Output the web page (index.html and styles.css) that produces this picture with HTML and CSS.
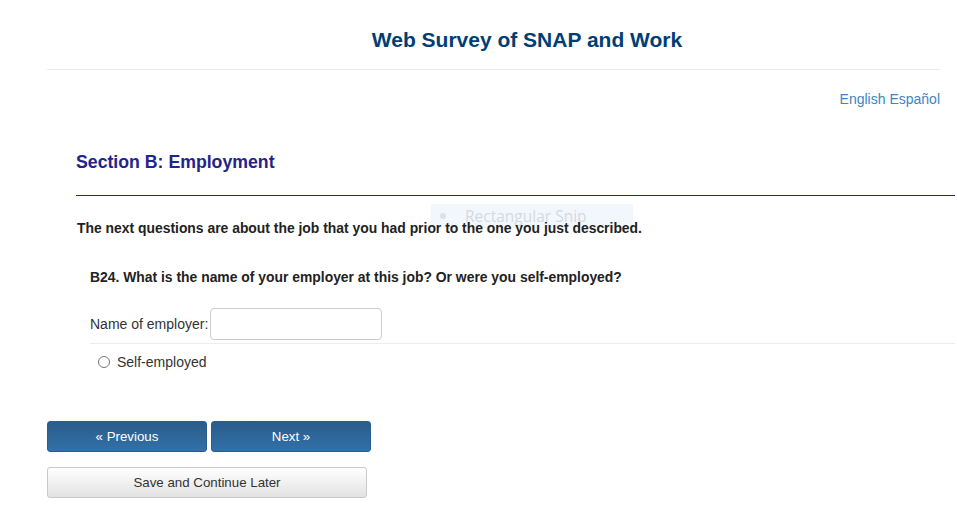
FILE: index.html
```html
<!DOCTYPE html>
<html lang="en">
<head>
<meta charset="utf-8">
<title>Web Survey of SNAP and Work</title>
<link rel="stylesheet" href="styles.css">
</head>
<body>
<div class="page">
  <header class="site-header">
    <h1 class="site-title">Web Survey of SNAP and Work</h1>
  </header>
  <div class="lang"><a href="#">English</a> <a href="#">Español</a></div>
  <div class="section">
    <h2 class="section-title">Section B: Employment</h2>
    <div class="intro">The next questions are about the job that you had prior to the one you just described.</div>
    <div class="question">
      <div class="q-text">B24. What is the name of your employer at this job? Or were you self-employed?</div>
      <div class="field-row">
        <label class="field-label" for="emp">Name of employer:</label>
        <input class="text-input" id="emp" type="text">
      </div>
      <label class="radio-row"><span class="radio"></span>Self-employed</label>
    </div>
  </div>
  <div class="nav">
    <div class="nav-row">
      <button class="btn btn-primary">« Previous</button>
      <button class="btn btn-primary">Next »</button>
    </div>
    <button class="btn btn-default">Save and Continue Later</button>
  </div>
  <div class="snip"><span class="snip-dot"></span>Rectangular Snip</div>
</div>
</body>
</html>
```

FILE: styles.css
```css
html, body {
  margin: 0;
  padding: 0;
}
html {
  background: #fff;
}
body {
  font-family: "Liberation Sans", Arial, sans-serif;
  color: #222;
}
.page {
  width: 893px;
  margin-left: 47px;
  position: relative;
  z-index: 0;
}
.site-header {
  border-bottom: 1px solid #eaeaea;
  padding: 28px 0 17px 67px;
  text-align: center;
}
.site-title {
  margin: 0;
  font-size: 21px;
  line-height: 24px;
  font-weight: bold;
  color: #003e74;
}
.lang {
  text-align: right;
  margin-top: 19px;
  font-size: 14px;
  line-height: 20px;
}
.lang a {
  color: #3b86c6;
  text-decoration: none;
}
.section {
  margin-left: 29px;
  margin-right: -15px;
  margin-top: 43px;
}
.section-title {
  margin: 0;
  font-size: 17.7px;
  line-height: 20px;
  font-weight: bold;
  color: #23238a;
  padding-bottom: 23px;
  border-bottom: 1px solid #24248c;
}
.intro {
  margin-top: 24px;
  margin-left: 1px;
  font-size: 13.9px;
  line-height: 16px;
  font-weight: bold;
  color: #222;
}
.question {
  margin-left: 14px;
  margin-top: 33px;
}
.q-text {
  font-size: 13.9px;
  line-height: 16px;
  font-weight: bold;
  color: #222;
}
.field-row {
  display: flex;
  align-items: center;
  margin-top: 23px;
  padding-bottom: 3px;
  border-bottom: 1px solid #ececec;
}
.field-label {
  font-size: 14px;
  color: #333;
  margin-right: 2px;
}
.text-input {
  width: 172px;
  height: 32px;
  box-sizing: border-box;
  border: 1px solid #ccc;
  border-radius: 4px;
  padding: 4px 8px;
  font-family: inherit;
  font-size: 14px;
}
.radio-row {
  display: flex;
  align-items: center;
  margin-top: 9px;
  margin-left: 8px;
  font-size: 14px;
  line-height: 18px;
  color: #333;
}
.radio {
  width: 12px;
  height: 12px;
  border: 1px solid #767676;
  border-radius: 50%;
  margin-right: 7px;
  box-sizing: border-box;
  background: #fff;
}
.nav {
  margin-top: 50px;
  display: flex;
  flex-direction: column;
  gap: 15px;
  align-items: flex-start;
}
.nav-row {
  display: flex;
  gap: 4px;
}
.btn {
  height: 31px;
  font-family: inherit;
  font-size: 13.3px;
  border-radius: 3px;
  cursor: pointer;
  padding: 0;
}
.btn-primary {
  width: 160px;
  color: #fff;
  border: 1px solid #2a5d8c;
  background: linear-gradient(to bottom, #2b5c8a, #3171a9);
}
.btn-default {
  width: 320px;
  color: #333;
  border: 1px solid #c9c9c9;
  background: linear-gradient(to bottom, #ffffff, #e2e2e2);
}
.snip {
  position: absolute;
  z-index: -1;
  left: 384px;
  top: 204px;
  width: 202px;
  height: 24px;
  background: #f2f7fd;
  color: #d6d9dd;
  font-family: "Open Sans", sans-serif;
  font-size: 15.5px;
  line-height: 24px;
  display: flex;
  align-items: center;
  box-sizing: border-box;
  padding-left: 9px;
}
.snip-dot {
  width: 6px;
  height: 6px;
  border-radius: 50%;
  background: #dde0e4;
  margin-right: 19px;
}
```
